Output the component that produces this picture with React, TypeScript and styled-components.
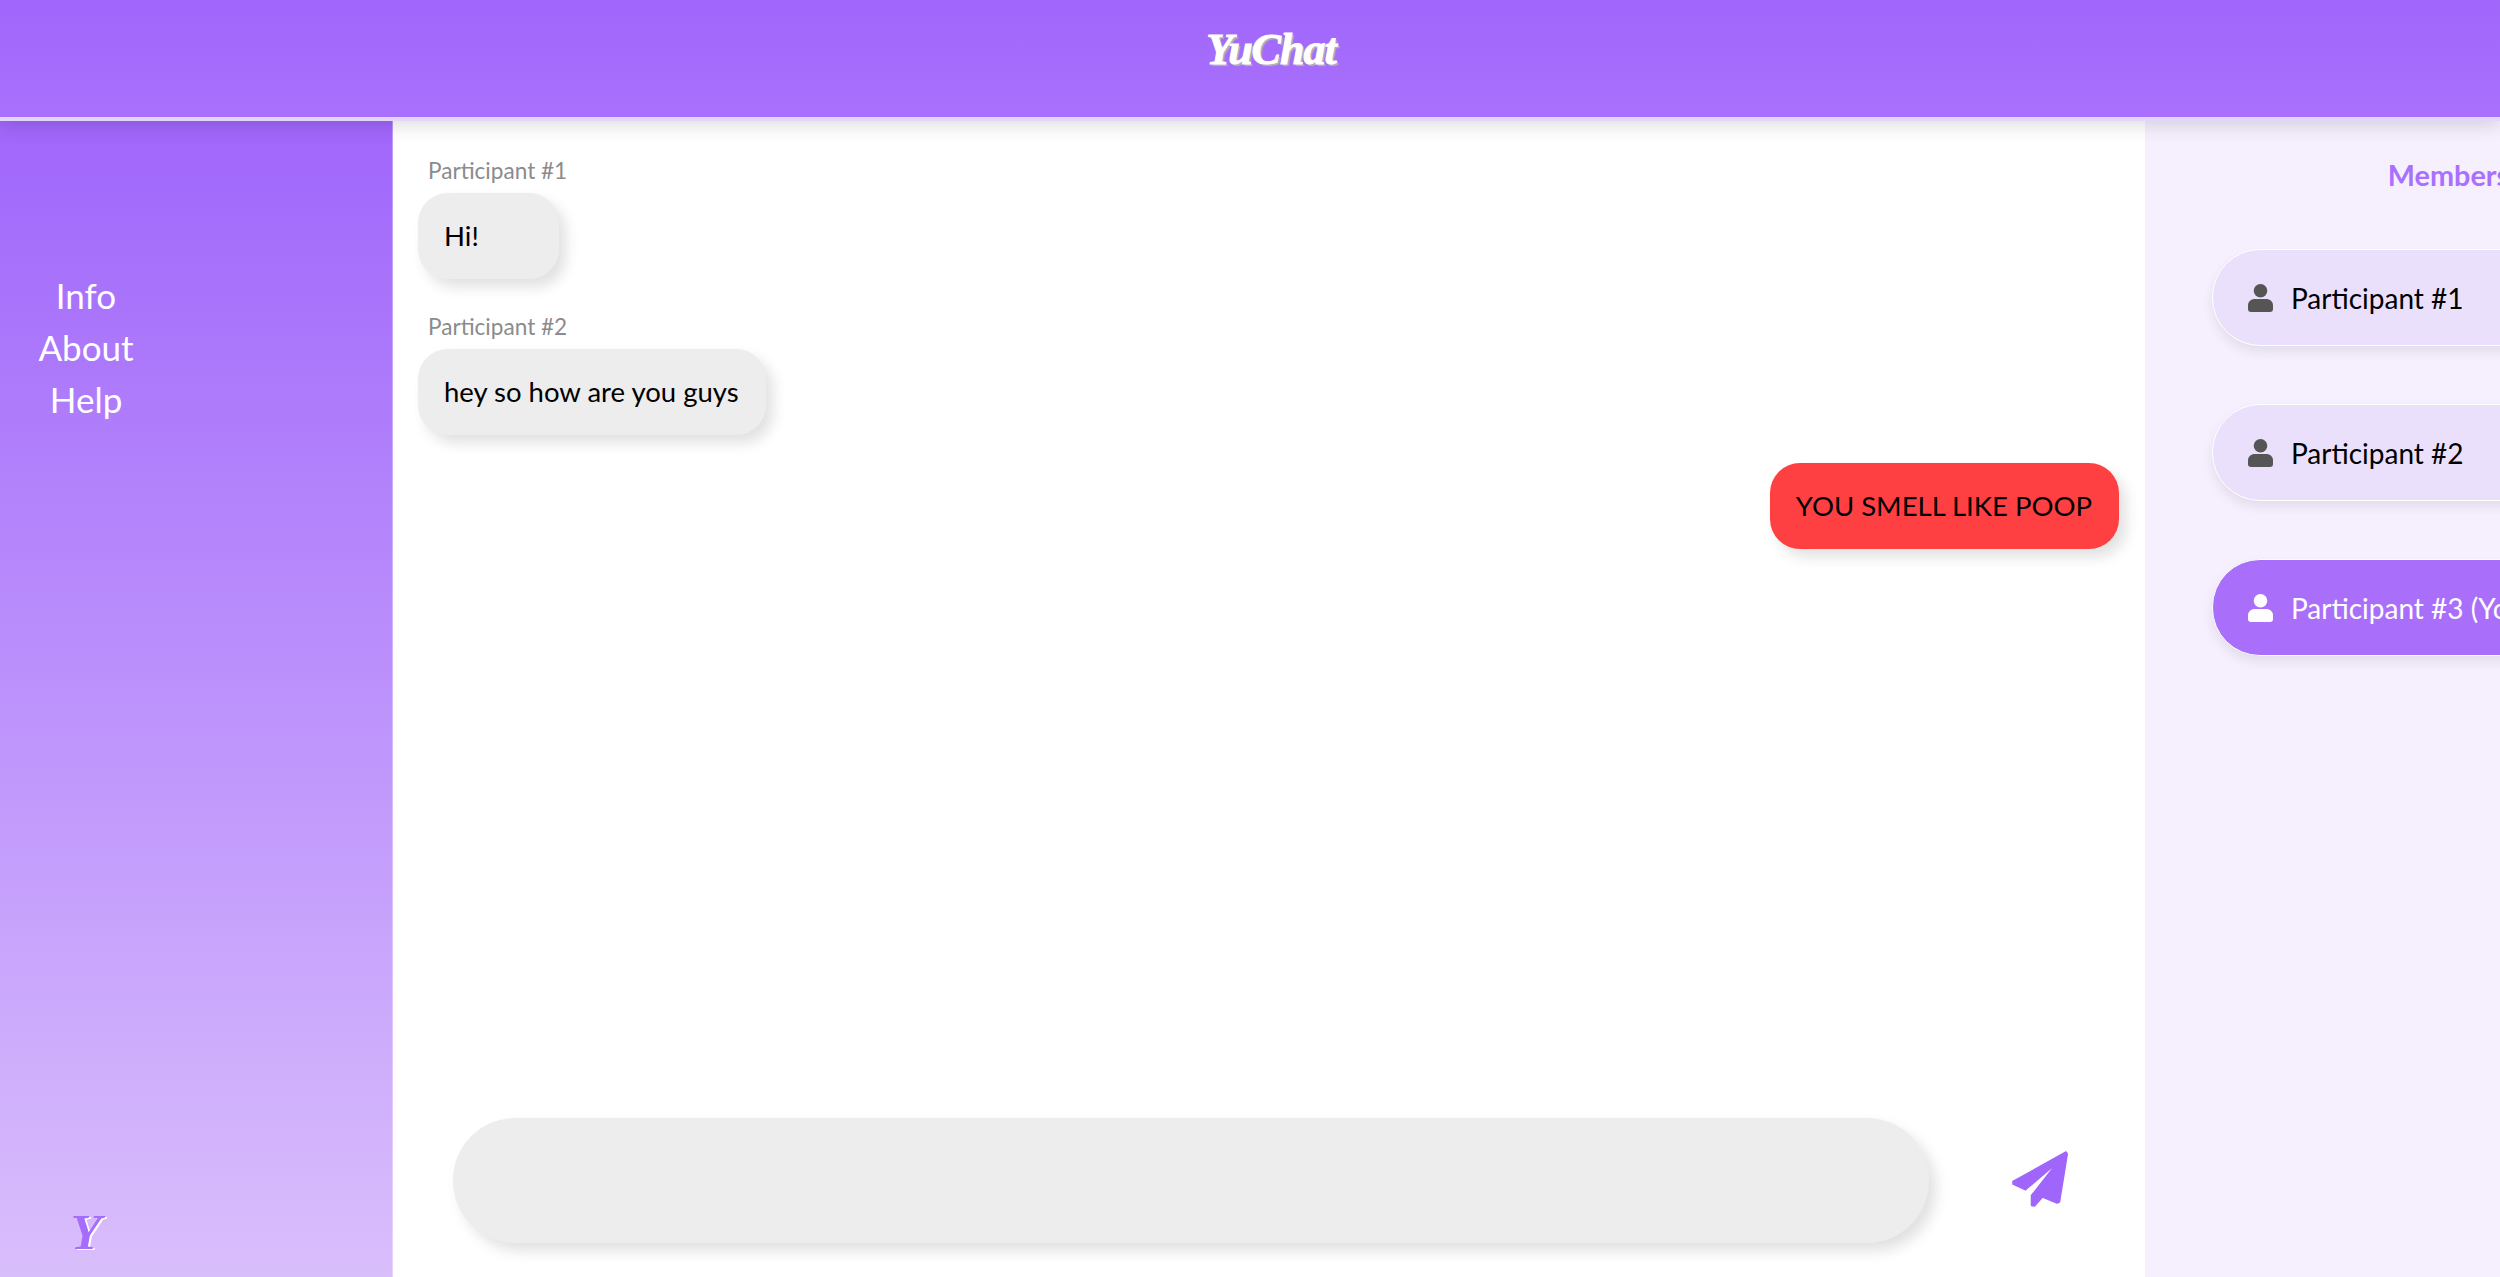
import styled, { createGlobalStyle } from "styled-components";

const GlobalStyle = createGlobalStyle`
	html, body {
		margin: 0;
		height: 100%;
		overflow: hidden;
		font-family: Lato, "Noto Sans", sans-serif;
	}
	#root {
		height: 100%;
	}
`;

const messages = [
	{ id: 1, author: "Participant #1", text: "Hi!" },
	{ id: 2, author: "Participant #2", text: "hey so how are you guys" },
	{ id: 3, text: "YOU SMELL LIKE POOP", mine: true },
];

const members = [
	{ id: 1, name: "Participant #1" },
	{ id: 2, name: "Participant #2" },
	{ id: 3, name: "Participant #3 (You)", active: true },
];

const PersonIcon = () => (
	<svg width="25" height="28" viewBox="0 0 25 28" fill="currentColor">
		<circle cx="12.5" cy="6.8" r="6.8" />
		<path d="M0 25v-3.5C0 17.5 3 15 7 15h11c4 0 7 2.500 7 6.500V25c0 2-1 3-3 3H3c-2 0-3-1-3-3z" />
	</svg>
);

const SendIcon = () => (
	<svg width="56" height="56" viewBox="0 0 56 56" fill="#a066fb">
		<path
			stroke="#a066fb"
			strokeWidth="1.500"
			strokeLinejoin="round"
			d="M54 1L55.300 3L47.500 51L45 52L30.500 46L22.500 55L19.500 54.500L19.500 44.500L45 12L13.500 38.800L1 33L1 30.500Z"
		/>
	</svg>
);

const App = () => {
	return (
		<Page>
			<GlobalStyle />
			<Header>
				<Logo>YuChat</Logo>
			</Header>
			<Body>
				<Sidebar>
					<Nav>
						<NavItem>Info</NavItem>
						<NavItem>About</NavItem>
						<NavItem>Help</NavItem>
					</Nav>
					<SmallLogo>Y</SmallLogo>
				</Sidebar>
				<Chat>
					<MessageList>
						{messages.map((m) => (
							<Message key={m.id} $mine={m.mine}>
								{m.author && <Author>{m.author}</Author>}
								<Bubble $mine={m.mine}>{m.text}</Bubble>
							</Message>
						))}
					</MessageList>
					<Composer>
						<Input />
						<SendButton>
							<SendIcon />
						</SendButton>
					</Composer>
				</Chat>
				<Members>
					<MembersTitle>Members</MembersTitle>
					<MemberList>
						{members.map((m) => (
							<Member key={m.id} $active={m.active}>
								<MemberIcon $active={m.active}>
									<PersonIcon />
								</MemberIcon>
								{m.name}
							</Member>
						))}
					</MemberList>
				</Members>
			</Body>
		</Page>
	);
};

export default App;

const Page = styled.div`
	display: flex;
	flex-direction: column;
	width: 2753px;
	height: 1277px;
	overflow: hidden;
`;

const Header = styled.header`
	position: relative;
	z-index: 2;
	flex: none;
	box-sizing: border-box;
	width: 2500px;
	height: 121px;
	padding: 0 0 4px 42px;
	display: flex;
	align-items: center;
	justify-content: center;
	background: linear-gradient(#a066fb, #a970fd);
	background-size: 100% 117px;
	background-repeat: no-repeat;
	background-color: #e2d7f8;
	box-shadow: 0 4px 18px rgba(0, 0, 0, 0.14);
`;

const Logo = styled.div`
	margin-top: -18px;
	font-family: "Liberation Serif", serif;
	font-style: italic;
	font-weight: 700;
	font-size: 44px;
	letter-spacing: -1px;
	color: #fff;
	-webkit-text-stroke: 1px #fff;
	text-shadow: 2px 2px 1px #b3b3b3;
`;

const Body = styled.div`
	flex: 1;
	display: flex;
	min-height: 0;
`;

const Sidebar = styled.aside`
	flex: none;
	box-sizing: border-box;
	width: 393px;
	padding-top: 148px;
	display: flex;
	flex-direction: column;
	justify-content: space-between;
	background: linear-gradient(#a066fb, #d9befc);
	border-right: 1px solid rgba(255, 255, 255, 0.35);
`;

const Nav = styled.nav`
	width: 172px;
	display: flex;
	flex-direction: column;
	align-items: center;
`;

const NavItem = styled.a`
	font-size: 35px;
	line-height: 52px;
	color: #fff;
`;

const SmallLogo = styled.div`
	width: 172px;
	margin-bottom: 20px;
	text-align: center;
	font-family: "Liberation Serif", serif;
	font-style: italic;
	font-weight: 700;
	font-size: 50px;
	line-height: 50px;
	color: #a66cfb;
	text-shadow: 2px 1px 0 #fff;
`;

const Chat = styled.main`
	flex: none;
	box-sizing: border-box;
	width: 1752px;
	display: flex;
	flex-direction: column;
	justify-content: space-between;
	background: #fff;
`;

const MessageList = styled.div`
	padding: 30px 26px 0 25px;
	display: flex;
	flex-direction: column;
	gap: 28px;
`;

const Message = styled.div<{ $mine?: boolean }>`
	display: flex;
	flex-direction: column;
	align-items: ${(props) => (props.$mine ? "flex-end" : "flex-start")};
`;

const Author = styled.div`
	margin: 5px 0 7px 10px;
	font-size: 22.6px;
	line-height: 30px;
	color: #8b8b8b;
`;

const Bubble = styled.div<{ $mine?: boolean }>`
	padding: 26px 27px 26px 26px;
	min-width: 88px;
	font-size: 27.5px;
	line-height: 34px;
	border-radius: 30px;
	color: #000;
	background: ${(props) => (props.$mine ? "#ff4043" : "#ededed")};
	box-shadow: 7px 8px 14px rgba(0, 0, 0, 0.12);
`;

const Composer = styled.div`
	padding: 0 0 34px 60px;
	display: flex;
	align-items: center;
`;

const Input = styled.div`
	width: 1476px;
	height: 125px;
	border-radius: 62px;
	background: #ededed;
	box-shadow: 7px 8px 14px rgba(0, 0, 0, 0.12);
`;

const SendButton = styled.button`
	margin: -3px 0 0 83px;
	padding: 0;
	border: 0;
	background: none;
	display: flex;
`;

const Members = styled.aside`
	flex: none;
	box-sizing: border-box;
	width: 608px;
	padding: 34px 68px 0 67px;
	background: #f5effe;
`;

const MembersTitle = styled.h2`
	margin: 0 0 54px;
	text-align: center;
	font-size: 28.8px;
	font-weight: 700;
	line-height: 40px;
	color: #a970fd;
`;

const MemberList = styled.div`
	display: flex;
	flex-direction: column;
	gap: 58px;
`;

const Member = styled.div<{ $active?: boolean }>`
	box-sizing: border-box;
	height: 97px;
	padding-left: 35px;
	display: flex;
	align-items: center;
	gap: 18px;
	border: 1px solid #fff;
	border-radius: 48px;
	font-size: 28px;
	color: ${(props) => (props.$active ? "#fff" : "#000")};
	background: ${(props) => (props.$active ? "#a96ffa" : "#ebe0fb")};
	box-shadow: 0 6px 12px rgba(0, 0, 0, 0.08);
`;

const MemberIcon = styled.span<{ $active?: boolean }>`
	display: flex;
	color: ${(props) => (props.$active ? "#fff" : "#555")};
`;
